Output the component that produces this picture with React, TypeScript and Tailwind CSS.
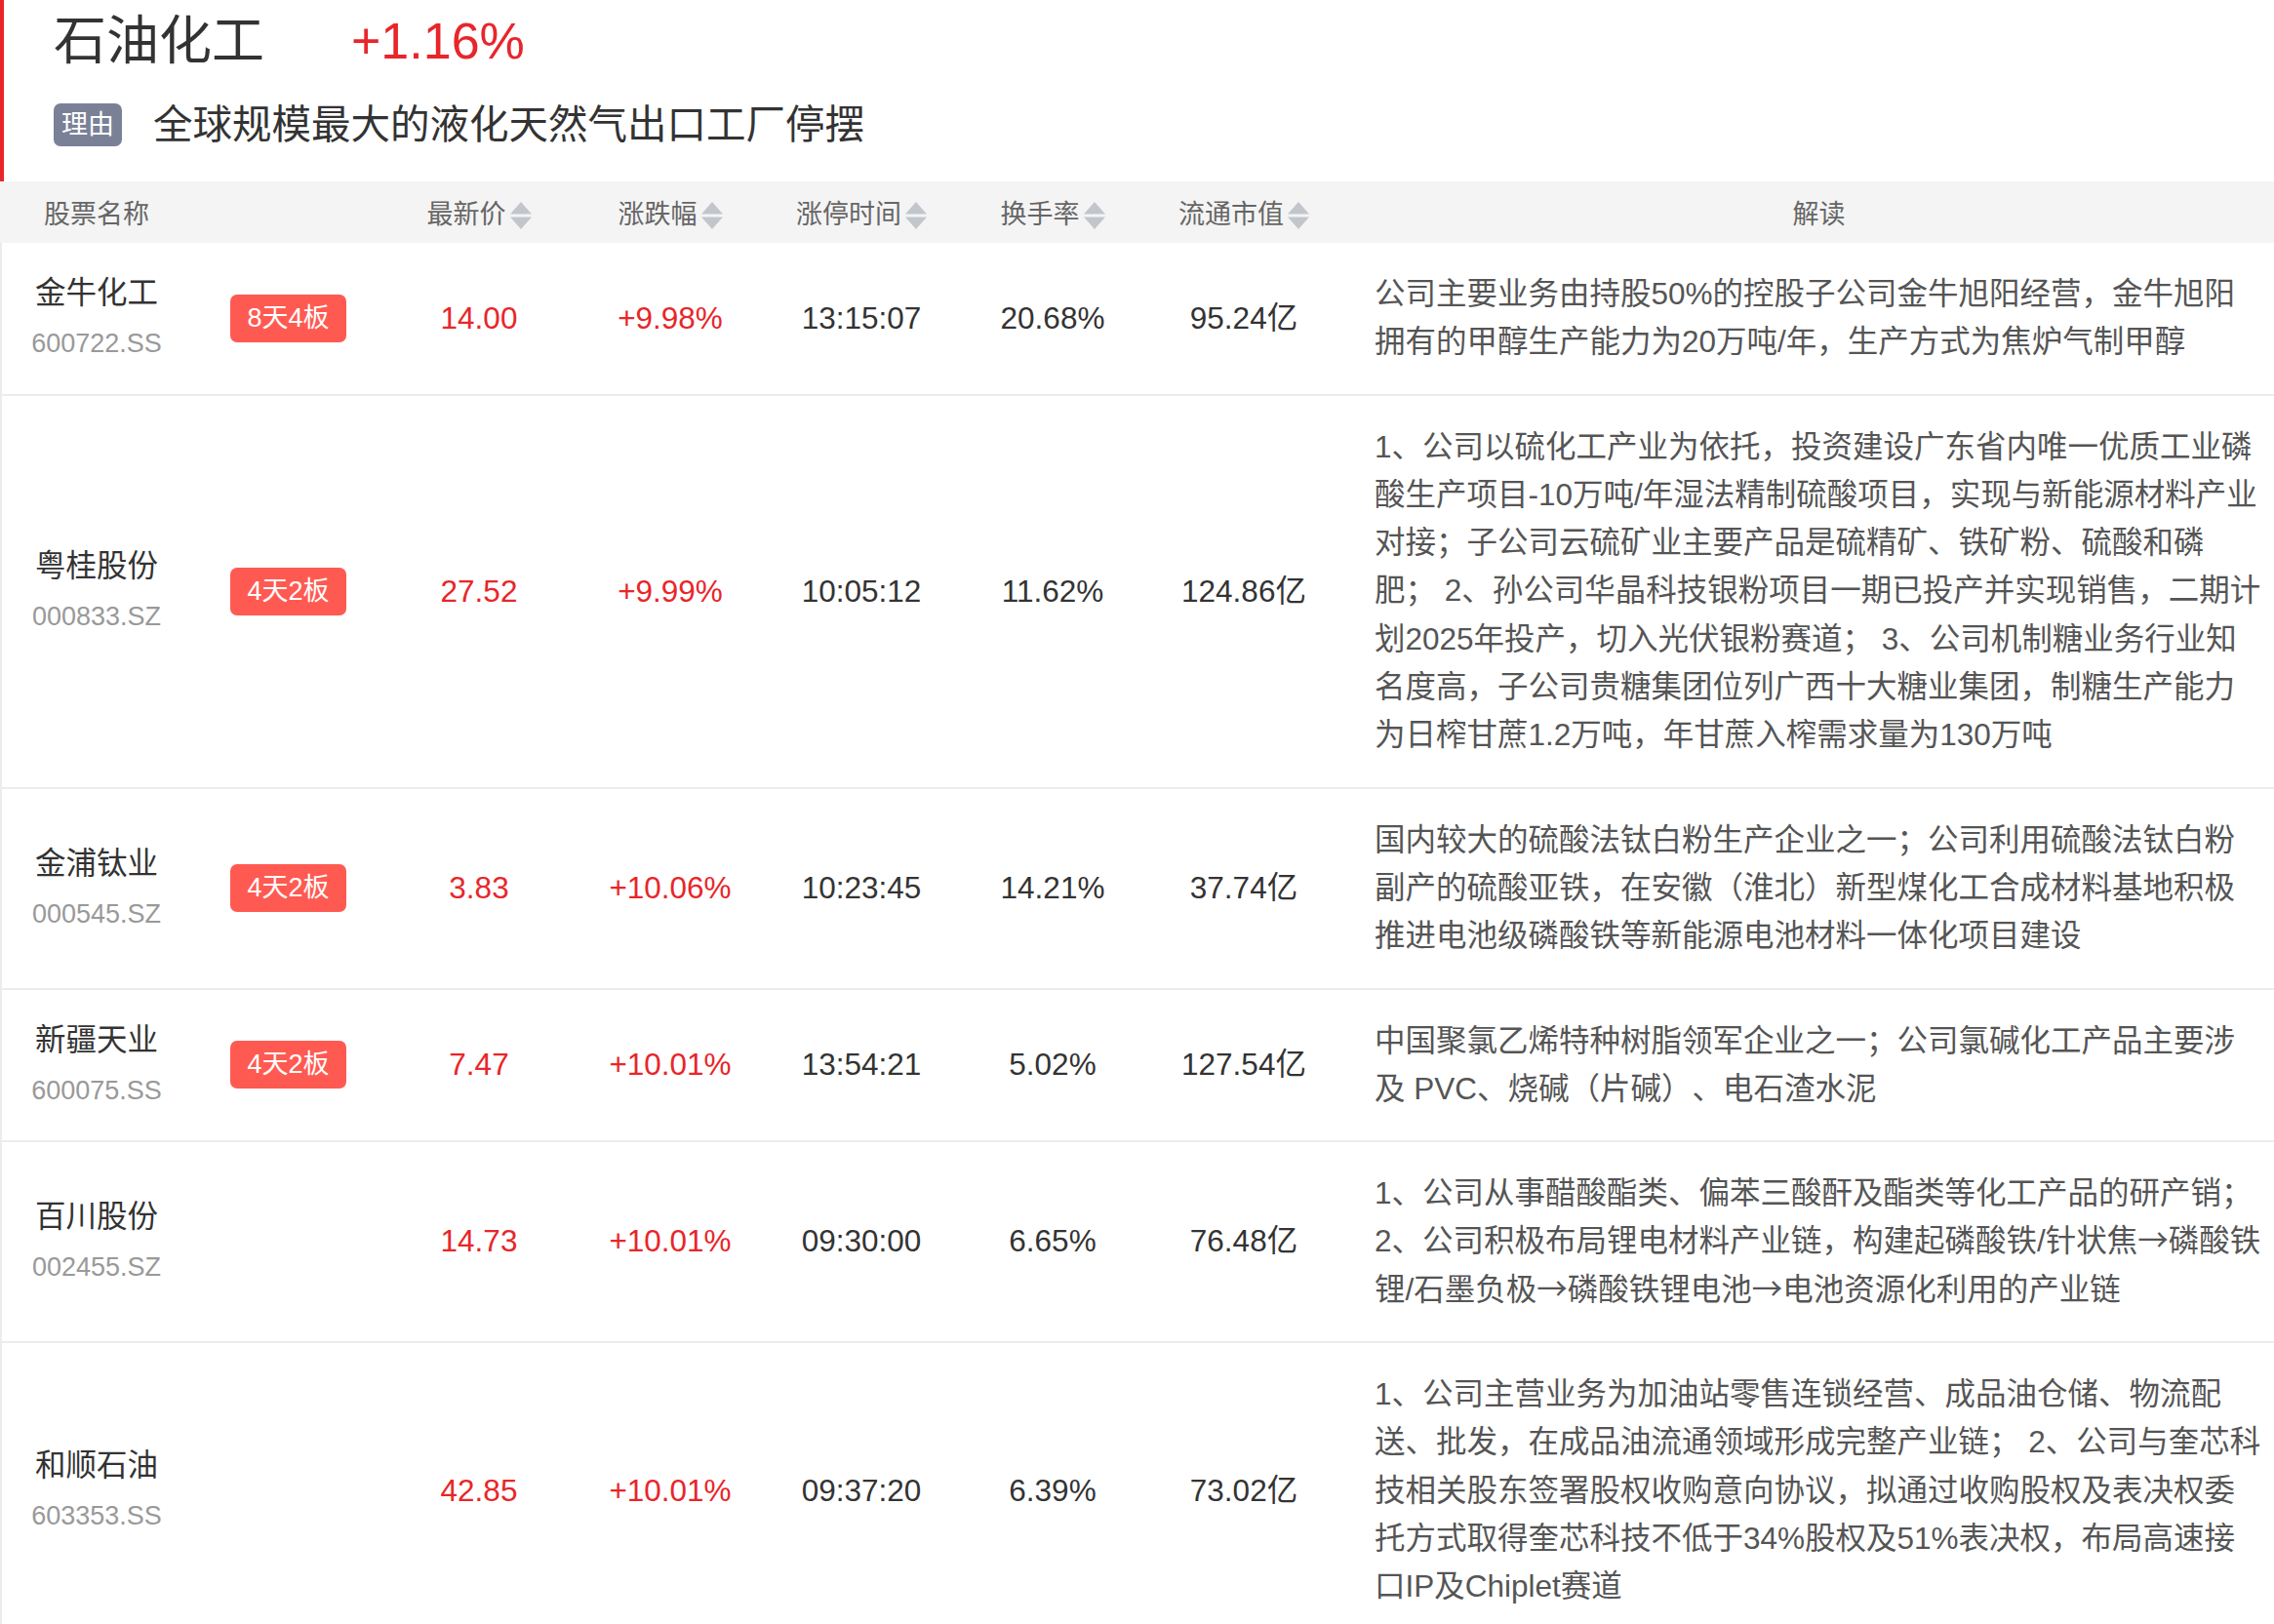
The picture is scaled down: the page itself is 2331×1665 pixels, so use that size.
import type { ReactNode } from 'react';

interface Stock {
  name: string;
  code: string;
  badge?: string;
  price: string;
  change: string;
  time: string;
  turnover: string;
  cap: string;
  desc: string;
}

const STOCKS: Stock[] = [
  {
    name: '金牛化工', code: '600722.SS', badge: '8天4板', price: '14.00', change: '+9.98%', time: '13:15:07', turnover: '20.68%', cap: '95.24亿',
    desc: '公司主要业务由持股50%的控股子公司金牛旭阳经营，金牛旭阳拥有的甲醇生产能力为20万吨/年，生产方式为焦炉气制甲醇',
  },
  {
    name: '粤桂股份', code: '000833.SZ', badge: '4天2板', price: '27.52', change: '+9.99%', time: '10:05:12', turnover: '11.62%', cap: '124.86亿',
    desc: '1、公司以硫化工产业为依托，投资建设广东省内唯一优质工业磷酸生产项目-10万吨/年湿法精制硫酸项目，实现与新能源材料产业对接；子公司云硫矿业主要产品是硫精矿、铁矿粉、硫酸和磷肥； 2、孙公司华晶科技银粉项目一期已投产并实现销售，二期计划2025年投产，切入光伏银粉赛道； 3、公司机制糖业务行业知名度高，子公司贵糖集团位列广西十大糖业集团，制糖生产能力为日榨甘蔗1.2万吨，年甘蔗入榨需求量为130万吨',
  },
  {
    name: '金浦钛业', code: '000545.SZ', badge: '4天2板', price: '3.83', change: '+10.06%', time: '10:23:45', turnover: '14.21%', cap: '37.74亿',
    desc: '国内较大的硫酸法钛白粉生产企业之一；公司利用硫酸法钛白粉副产的硫酸亚铁，在安徽（淮北）新型煤化工合成材料基地积极推进电池级磷酸铁等新能源电池材料一体化项目建设',
  },
  {
    name: '新疆天业', code: '600075.SS', badge: '4天2板', price: '7.47', change: '+10.01%', time: '13:54:21', turnover: '5.02%', cap: '127.54亿',
    desc: '中国聚氯乙烯特种树脂领军企业之一；公司氯碱化工产品主要涉及 PVC、烧碱（片碱）、电石渣水泥',
  },
  {
    name: '百川股份', code: '002455.SZ', price: '14.73', change: '+10.01%', time: '09:30:00', turnover: '6.65%', cap: '76.48亿',
    desc: '1、公司从事醋酸酯类、偏苯三酸酐及酯类等化工产品的研产销； 2、公司积极布局锂电材料产业链，构建起磷酸铁/针状焦→磷酸铁锂/石墨负极→磷酸铁锂电池→电池资源化利用的产业链',
  },
  {
    name: '和顺石油', code: '603353.SS', price: '42.85', change: '+10.01%', time: '09:37:20', turnover: '6.39%', cap: '73.02亿',
    desc: '1、公司主营业务为加油站零售连锁经营、成品油仓储、物流配送、批发，在成品油流通领域形成完整产业链； 2、公司与奎芯科技相关股东签署股权收购意向协议，拟通过收购股权及表决权委托方式取得奎芯科技不低于34%股权及51%表决权，布局高速接口IP及Chiplet赛道',
  },
];

const COLS = 'grid grid-cols-[198px_195px_196px_196px_196px_196px_196px_1fr]';

function SortIcon() {
  return (
    <svg className="w-[22px] h-[28px] ml-[4px] shrink-0" viewBox="0 0 22 28" fill="#c2c6cc">
      <polygon points="11,0 22,12.5 0,12.5" />
      <polygon points="0,15.5 22,15.5 11,28" />
    </svg>
  );
}

function SortHead({ children }: { children: ReactNode }) {
  return (
    <div className="flex items-center justify-center">
      <span>{children}</span>
      <SortIcon />
    </div>
  );
}

// arrows come out tiny in Liberation Sans, use the CJK glyph instead
function Desc({ text }: { text: string }) {
  const parts = text.split('→');
  return (
    <p className="w-[911px] text-[31.5px] leading-[49.3px] text-[#555]">
      {parts.map((p, i) => (
        <span key={i}>
          {i > 0 && <span className="font-['Noto_Sans_CJK_SC',sans-serif] leading-none">→</span>}
          {p}
        </span>
      ))}
    </p>
  );
}

export default function App() {
  return (
    <div className="min-h-screen bg-white font-['Liberation_Sans','Noto_Sans_CJK_SC',sans-serif] [text-spacing-trim:space-all]">
      {/* Title */}
      <div className="h-[186px] border-l-[4px] border-[#e8262a] pl-[51px] pt-[6px]">
        <div className="flex items-center h-[72px]">
          <span className="text-[54px] leading-[72px] text-[#333]">石油化工</span>
          <span className="ml-[89px] text-[52px] leading-[72px] text-[#e8262a]">+1.16%</span>
        </div>
        <div className="flex items-center mt-[25px]">
          <span className="w-[70px] h-[44px] rounded-[7px] bg-[#7a8197] text-white text-[27px] leading-[44px] text-center">
            理由
          </span>
          <span className="ml-[32px] text-[40.5px] leading-[50px] text-[#333]">全球规模最大的液化天然气出口工厂停摆</span>
        </div>
      </div>

      {/* Table header */}
      <div className={`${COLS} h-[63px] pt-[6px] items-center bg-[#f4f4f4] text-[27px] text-[#666]`}>
        <div className="text-center">股票名称</div>
        <div />
        <SortHead>最新价</SortHead>
        <SortHead>涨跌幅</SortHead>
        <SortHead>涨停时间</SortHead>
        <SortHead>换手率</SortHead>
        <SortHead>流通市值</SortHead>
        <div className="pl-[36px] pr-[11px] text-center">解读</div>
      </div>

      {/* Rows */}
      <div className="shadow-[inset_2px_0_0_#ececec]">
        {STOCKS.map(s => (
          <div key={s.code} className={`${COLS} items-center border-b-2 border-[#ececec]`}>
            <div className="flex flex-col items-center">
              <span className="text-[31.5px] leading-[44px] text-[#333]">{s.name}</span>
              <span className="mt-[8px] text-[27px] leading-[44px] text-[#999]">{s.code}</span>
            </div>
            <div className="flex justify-center">
              {s.badge && (
                <span className="h-[49px] px-[17px] rounded-[7px] bg-[#ff5a52] text-white text-[27px] leading-[49px]">
                  {s.badge}
                </span>
              )}
            </div>
            <div className="text-center text-[31.5px] text-[#e8262a]">{s.price}</div>
            <div className="text-center text-[31.5px] text-[#e8262a]">{s.change}</div>
            <div className="text-center text-[31.5px] text-[#333]">{s.time}</div>
            <div className="text-center text-[31.5px] text-[#333]">{s.turnover}</div>
            <div className="text-center text-[31.5px] text-[#333]">{s.cap}</div>
            <div className="pl-[36px] py-[28px]">
              <Desc text={s.desc} />
            </div>
          </div>
        ))}
      </div>
    </div>
  );
}
